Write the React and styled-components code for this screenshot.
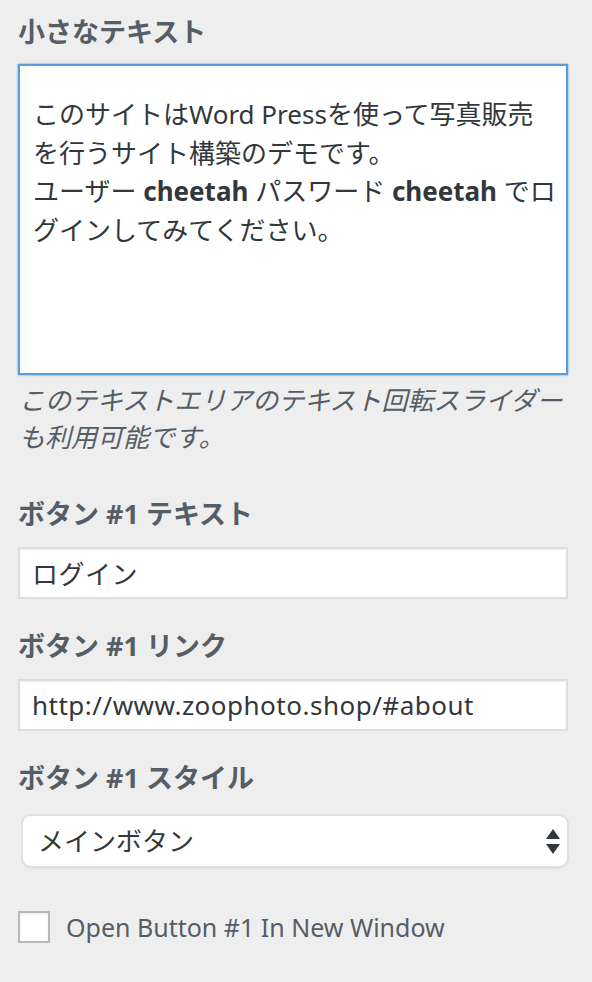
import React from "react";
import styled, { createGlobalStyle } from "styled-components";

//Global======================================================
const GlobalStyle = createGlobalStyle`
  body {
    margin: 0;
    background: #eeeeee;
    font-family: "Noto Sans", "Noto Sans CJK JP", sans-serif;
    color: #32373c;
  }
`;

//Styled Components==========================================
const Panel = styled.div`
  display: flex;
  flex-direction: column;
  padding: 14px 24px 40px 18px;
`;

const Field = styled.div`
  display: flex;
  flex-direction: column;
  gap: ${props => props.gap ?? 15}px;
  margin-bottom: ${props => props.spacing ?? 29}px;
`;

const Label = styled.label`
  font-size: 27px;
  line-height: 36px;
  font-weight: 700;
  color: #555d66;
`;

const TextArea = styled.div`
  box-sizing: border-box;
  height: 311px;
  padding: 29px 7px 29px 13px;
  background: #fff;
  border: 2px solid #5b9dd9;
  box-shadow: 0 0 2px rgba(30, 140, 190, 0.8);
  font-size: 26px;
  line-height: 38.5px;
  color: #32373c;

  strong {
    font-weight: 700;
  }
`;

const Description = styled.p`
  margin: 7px 0 40px 1px;
  font-size: 26px;
  line-height: 37px;
  font-style: italic;
  color: #555d66;
`;

const InputText = styled.input`
  box-sizing: border-box;
  width: 100%;
  height: 52px;
  margin: 0;
  padding: 0 12px;
  background: #fff;
  border: 2px solid #dddddd;
  box-shadow: inset 0 1px 2px rgba(0, 0, 0, 0.07);
  font-family: inherit;
  font-size: 26px;
  letter-spacing: 0.5px;
  color: #32373c;
  outline: none;
`;

const SelectWrap = styled.div`
  position: relative;
  margin: 3px -1px 0 3px;
`;

const Select = styled.select`
  box-sizing: border-box;
  width: 100%;
  height: 54px;
  padding: 0 40px 0 15px;
  appearance: none;
  background: #fff;
  border: 2px solid #e0e0e0;
  border-radius: 10px;
  box-shadow: 0 1px 1px rgba(0, 0, 0, 0.04);
  font-family: inherit;
  font-size: 26px;
  color: #32373c;
  outline: none;
`;

const Arrows = styled.svg`
  position: absolute;
  right: 9px;
  top: 15px;
  pointer-events: none;
`;

const CheckRow = styled.label`
  display: flex;
  align-items: center;
  gap: 16px;
  margin-top: 42px;
  font-size: 25px;
  line-height: 34px;
  color: #555d66;
`;

const CheckBox = styled.span`
  box-sizing: border-box;
  width: 32px;
  height: 32px;
  flex: none;
  background: #fff;
  border: 2px solid #b4b9be;
  box-shadow: inset 0 1px 2px rgba(0, 0, 0, 0.1);
`;

//Component===================================================
//============================================================

const App = () => {
  return (
    <>
      <GlobalStyle />
      <Panel>
        <Field gap={14} spacing={0}>
          <Label>小さなテキスト</Label>
          <TextArea role="textbox">
            このサイトはWord Pressを使って写真販売を行うサイト構築のデモです。
            <br />
            ユーザー <strong>cheetah</strong> パスワード <strong>cheetah</strong> でログインしてみてください。
          </TextArea>
        </Field>
        <Description>
          このテキストエリアのテキスト回転スライダーも利用可能です。
        </Description>

        <Field>
          <Label>ボタン #1 テキスト</Label>
          <InputText type="text" defaultValue="ログイン" />
        </Field>

        <Field>
          <Label>ボタン #1 リンク</Label>
          <InputText type="text" defaultValue="http://www.zoophoto.shop/#about" />
        </Field>

        <Field gap={15} spacing={0}>
          <Label>ボタン #1 スタイル</Label>
          <SelectWrap>
            <Select defaultValue="primary">
              <option value="primary">メインボタン</option>
              <option value="secondary">サブボタン</option>
            </Select>
            <Arrows width="14" height="26" viewBox="0 0 14 26">
              <path d="M7 0 L14 10 L0 10 Z" fill="#32373c" />
              <path d="M0 15 L14 15 L7 25 Z" fill="#32373c" />
            </Arrows>
          </SelectWrap>
        </Field>

        <CheckRow>
          <CheckBox />
          Open Button #1 In New Window
        </CheckRow>
      </Panel>
    </>
  );
};

export default App;
